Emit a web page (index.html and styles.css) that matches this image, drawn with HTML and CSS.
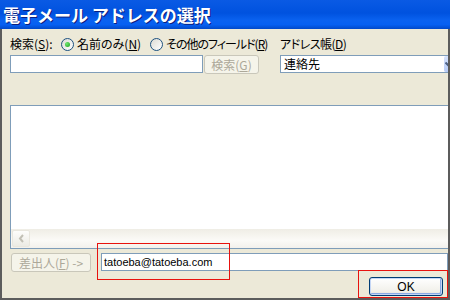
FILE: index.html
```html
<!DOCTYPE html>
<html lang="ja">

<head>
    <meta charset="UTF-8" />
    <title>電子メール アドレスの選択</title>
    <link rel="stylesheet" href="styles.css">
</head>

<body>
    <div class="window">
        <div class="titlebar">
            <span class="title">電子メール アドレスの選択</span>
        </div>

        <div class="client">
            <div class="search">
                <div class="search-left">
                    <div class="options">
                        <span class="caption">検索(<u>S</u>):</span>
                        <span class="radio checked first"><span class="dot"></span><span>名前のみ(<u>N</u>)</span></span>
                        <span class="radio other"><span class="dot"></span><span>その他のフィールド(<u>R</u>)</span></span>
                    </div>
                    <div class="fields">
                        <div class="textbox query"></div>
                        <button class="btn disabled search-btn">検索(<u>G</u>)</button>
                    </div>
                </div>
                <div class="search-right">
                    <div class="caption">アドレス帳(<u>D</u>)</div>
                    <div class="combo">
                        <span>連絡先</span>
                        <span class="drop">
                            <svg width="7" height="5" viewBox="0 0 7 5"><path d="M0.5 0.5 L3.5 3.5 L6.5 0.5" fill="none" stroke="#4D6185" stroke-width="2"/></svg>
                        </span>
                    </div>
                </div>
            </div>

            <div class="list">
                <div class="hscroll">
                    <span class="arrow">
                        <svg width="7" height="9" viewBox="0 0 7 9"><path d="M5 1 L2 4.5 L5 8" fill="none" stroke="#C2C0B5" stroke-width="2"/></svg>
                    </span>
                </div>
            </div>

            <div class="from-row">
                <button class="btn disabled from-btn">差出人(<u>F</u>) -&gt;</button>
                <div class="textbox email">tatoeba@tatoeba.com</div>
            </div>

            <div class="actions">
                <button class="btn ok">OK</button>
            </div>
        </div>

        <!-- annotation boxes -->
        <div class="mark mark-email"></div>
        <div class="mark mark-ok"></div>
    </div>
</body>

</html>
```

FILE: styles.css
```css
body {
    margin: 0;
    font-family: "Noto Sans CJK JP", sans-serif;
    font-size: 12px;
    line-height: 14px;
    font-feature-settings: "palt";
    color: #000;
}

.window {
    position: relative;
    width: 450px;
    height: 300px;
    display: flex;
    flex-direction: column;
    background: #ECE9D8;
    overflow: hidden;
}

.titlebar {
    flex: none;
    height: 29px;
    display: flex;
    align-items: center;
    padding-left: 3px;
    background: linear-gradient(#0A5AE4 0%, #0052DF 45%, #0A62F0 70%, #0660F2 85%, #0149C9 100%);
}

.title {
    color: #fff;
    font-weight: bold;
    font-size: 17px;
    line-height: 20px;
    font-feature-settings: normal;
    text-shadow: 1px 1px 0 #0B2080;
}

.client {
    flex: 1;
    display: flex;
    flex-direction: column;
    padding: 8px 0 0 8px;
    border: 2px solid #5C5C5C;
    border-top: none;
    overflow: hidden;
}

.search {
    display: flex;
}

.search-left {
    flex: none;
    width: 270px;
}

.options {
    display: flex;
    align-items: center;
    height: 14px;
    white-space: nowrap;
}

.options .caption {
    width: 51px;
}

.radio {
    display: flex;
    align-items: center;
    gap: 3px;
}

.radio.first {
    width: 89px;
}

.radio.other span + span {
    letter-spacing: -1px;
}

.dot {
    position: relative;
    width: 13px;
    height: 13px;
    box-sizing: border-box;
    border: 1px solid #1C5180;
    border-radius: 50%;
    background: linear-gradient(135deg, #DCDBD3, #FFFFFF);
}

.radio.checked .dot::after {
    content: "";
    position: absolute;
    left: 3px;
    top: 3px;
    width: 5px;
    height: 5px;
    border-radius: 50%;
    background: radial-gradient(circle at 35% 35%, #6FE86F, #1E9E1E);
}

.fields {
    display: flex;
    gap: 1px;
    margin-top: 4px;
}

.textbox {
    box-sizing: border-box;
    height: 18px;
    border: 1px solid #7F9DB9;
    background: #fff;
}

.query {
    width: 193px;
}

.btn {
    font: inherit;
    box-sizing: border-box;
    height: 19px;
    padding: 0;
    border-radius: 3px;
    cursor: default;
}

.btn.disabled {
    border: 1px solid #C9C7BA;
    background: #F5F4EA;
    color: #ACA899;
}

.search-btn {
    width: 55px;
}

.search-right {
    flex: 1;
    white-space: nowrap;
}

.search-right .caption {
    height: 14px;
    letter-spacing: -0.5px;
}

.combo {
    display: flex;
    align-items: center;
    justify-content: space-between;
    box-sizing: border-box;
    width: 182px;
    height: 18px;
    margin-top: 4px;
    padding-left: 3px;
    border: 1px solid #7F9DB9;
    background: #fff;
}

.drop {
    display: flex;
    align-items: center;
    width: 17px;
    height: 16px;
    padding-left: 1px;
    box-sizing: border-box;
    border-radius: 2px;
    background: linear-gradient(#D5E2FC, #B6CAF7);
}

.list {
    display: flex;
    flex-direction: column;
    justify-content: flex-end;
    box-sizing: border-box;
    width: 452px;
    height: 144px;
    margin-top: 31px;
    border: 1px solid #7F9DB9;
    background: #fff;
}

.hscroll {
    height: 19px;
    display: flex;
    align-items: center;
    padding-left: 1px;
    background: linear-gradient(#EFEDE5, #FBFAF7 60%, #F3F1EC);
}

.arrow {
    display: flex;
    align-items: center;
    justify-content: center;
    width: 18px;
    height: 17px;
    box-sizing: border-box;
    border: 1px solid #E9E7DE;
    border-radius: 2px;
    background: linear-gradient(#FDFDFB, #ECEBE4);
}

.from-row {
    display: flex;
    margin-top: 4px;
    height: 19px;
}

.from-btn {
    width: 83px;
    margin-left: 1px;
}

.email {
    width: 360px;
    margin-left: 10px;
    padding-left: 2px;
    font-family: "Liberation Sans", Arial, sans-serif;
    font-size: 11px;
    line-height: 16px;
}

.actions {
    display: flex;
    justify-content: flex-end;
    margin-top: 5px;
    padding-right: 5px;
}

.ok {
    width: 74px;
    border: 1px solid #003C74;
    background: linear-gradient(#FFFFFF, #F1F0EA 80%, #DEDCD2);
    box-shadow: inset 0 0 0 1px #C4D6F5, inset -1px -1px 0 1px #8AA9E6;
    font-family: "Liberation Sans", Arial, sans-serif;
    font-size: 12px;
}

.mark {
    position: absolute;
    box-sizing: border-box;
    border: 1px solid #E8120E;
    pointer-events: none;
}

.mark-email {
    left: 97px;
    top: 243px;
    width: 133px;
    height: 37px;
}

.mark-ok {
    left: 358px;
    top: 270px;
    width: 90px;
    height: 28px;
}
```
